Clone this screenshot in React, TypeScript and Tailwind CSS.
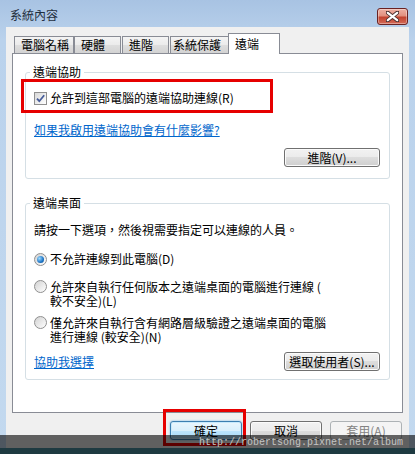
const font = "font-['Noto_Sans_CJK_TC','Liberation_Sans',sans-serif]";

const btn =
  "flex h-[19px] items-center justify-center rounded-[3px] border border-[#707070] bg-[linear-gradient(#f2f2f2_0%,#ebebeb_50%,#dddddd_50%,#cfcfcf_100%)] shadow-[inset_0_0_0_1px_#fbfbfb] text-[12px] leading-[16px] text-black";

function CheckBox() {
  return (
    <span className="flex h-[13px] w-[13px] shrink-0 items-center justify-center border border-[#8f8f8f] bg-[linear-gradient(135deg,#d8d8d8,#ffffff)]">
      <svg width="11" height="11" viewBox="0 0 11 11" aria-hidden="true">
        <path d="M2 5.6 L4.3 8.2 L9.2 2.2" fill="none" stroke="#465c99" strokeWidth="1.8" />
      </svg>
    </span>
  );
}

function Radio({ on }: { on?: boolean }) {
  return (
    <span className="flex h-[13px] w-[13px] shrink-0 items-center justify-center rounded-full border border-[#8f8f8f] bg-[linear-gradient(135deg,#d2d2d2,#ffffff)]">
      {on && (
        <span className="h-[7px] w-[7px] rounded-full bg-[radial-gradient(circle_at_35%_35%,#9fdcff,#1c74c6_60%,#0c4a86)]" />
      )}
    </span>
  );
}

function Tab({ label, w, pl, ml }: { label: string; w: string; pl: string; ml: string }) {
  return (
    <div
      className={`${w} ${pl} ${ml} flex h-[17px] items-center border border-b-0 border-[#898c95] bg-[linear-gradient(#f4f4f4_0%,#ebebeb_50%,#dedede_50%,#d3d3d3_100%)] text-[12px] leading-[16px]`}
    >
      {label}
    </div>
  );
}

export default function App() {
  return (
    <div
      className={`${font} relative flex h-[454px] w-[415px] flex-col overflow-hidden bg-[linear-gradient(#a8c3e3,#bad2ec_40px,#c3d9ef)] text-black`}
    >
      {/* title bar */}
      <div className="flex h-[27px] shrink-0 items-start justify-between pl-[10px] pr-[7px] pt-[8px]">
        <span className="mt-[-1px] text-[12px] leading-[16px] text-[#1f2f40]">系統內容</span>
        <div className="flex h-[17px] w-[31px] items-center justify-center rounded-[3px] border border-[#6a2222] bg-[linear-gradient(#edb0a3_0%,#e2907f_45%,#c2432f_55%,#d36a58_100%)] shadow-[inset_0_0_0_1px_rgba(255,255,255,0.35)]">
          <svg width="13" height="11" viewBox="0 0 13 11" aria-hidden="true">
            <path
              d="M1.5 1.5 L11.5 9.5 M11.5 1.5 L1.5 9.5"
              stroke="#4a3030"
              strokeWidth="4"
              strokeLinecap="round"
            />
            <path
              d="M1.8 1.8 L11.2 9.2 M11.2 1.8 L1.8 9.2"
              stroke="#ffffff"
              strokeWidth="2.2"
              strokeLinecap="round"
            />
          </svg>
        </div>
      </div>

      {/* client area */}
      <div className="mx-[6px] flex flex-1 flex-col bg-[#f0f0f0] px-[6px] pt-[6px]">
        <div className="flex h-[20px] items-end pl-[2px]">
          <Tab label="電腦名稱" w="w-[60px]" pl="pl-[6px]" ml="ml-0" />
          <Tab label="硬體" w="w-[47px]" pl="pl-[6px]" ml="ml-0" />
          <Tab label="進階" w="w-[47px]" pl="pl-[6px]" ml="ml-[1px]" />
          <Tab label="系統保護" w="w-[59px]" pl="pl-[2px]" ml="ml-[1px]" />
          <div className="relative z-10 mb-[-1px] ml-[-1px] flex h-[21px] w-[52px] items-center border border-b-0 border-[#898c95] bg-white pl-[6px] text-[12px] leading-[16px]">
            遠端
          </div>
        </div>

        <div className="flex h-[360px] flex-col border border-[#898c95] bg-white px-[12px]">
          <fieldset className="mt-[10px] rounded-[3px] border border-[#d5dfe5] pb-[11px] pl-[8px] pr-[9px] pt-[10px]">
            <legend className="ml-[-4px] px-[3px] text-[12px] leading-[16px]">遠端協助</legend>
            <div className="flex h-[16px] items-center gap-[3px] text-[12px] leading-[16px]">
              <CheckBox />
              <span>允許到這部電腦的遠端協助連線(R)</span>
            </div>
            <div className="mt-[16px] h-[16px] text-[12px] leading-[16px]">
              <span className="text-[#0066cc] underline">如果我啟用遠端協助會有什麼影響?</span>
            </div>
            <div className="mt-[10px] flex justify-end">
              <button className={`${btn} w-[96px]`}>進階(V)...</button>
            </div>
          </fieldset>

          <fieldset className="mt-[16px] rounded-[3px] border border-[#d5dfe5] pb-[8px] pl-[8px] pr-[9px] pt-[11px]">
            <legend className="ml-[-4px] px-[3px] text-[12px] leading-[16px]">遠端桌面</legend>
            <div className="h-[16px] text-[12px] leading-[16px]">
              請按一下選項，然後視需要指定可以連線的人員。
            </div>
            <div className="mt-[13px] flex h-[16px] items-center gap-[3px] text-[12px] leading-[16px]">
              <Radio on />
              <span>不允許連線到此電腦(D)</span>
            </div>
            <div className="mt-[13px] flex items-start gap-[3px] text-[12px] leading-[14px]">
              <Radio />
              <span>
                允許來自執行任何版本之遠端桌面的電腦進行連線 (
                <br />
                較不安全)(L)
              </span>
            </div>
            <div className="mt-[8px] flex items-start gap-[3px] text-[12px] leading-[14px]">
              <Radio />
              <span>
                僅允許來自執行含有網路層級驗證之遠端桌面的電腦
                <br />
                進行連線 (較安全)(N)
              </span>
            </div>
            <div className="mt-[8px] flex items-center justify-between">
              <span className="text-[12px] leading-[16px] text-[#0066cc] underline">協助我選擇</span>
              <button className={`${btn} w-[96px]`}>選取使用者(S)...</button>
            </div>
          </fieldset>
        </div>

        <div className="flex justify-end gap-[8px] pr-[1px] pt-[8px]">
          <button className="flex h-[19px] w-[72px] items-center justify-center rounded-[3px] border border-[#3c7fb1] bg-[linear-gradient(#eaf6fd_0%,#d9f0fc_50%,#bee6fd_50%,#a7d9f5_100%)] shadow-[inset_0_0_0_1px_#c8eafc,0_0_2px_#5fb4e8] text-[12px] leading-[16px]">
            確定
          </button>
          <button className={`${btn} w-[72px]`}>取消</button>
          <button className="flex h-[19px] w-[72px] items-center justify-center rounded-[3px] border border-[#adb2b5] bg-[#f4f4f4] text-[12px] leading-[16px] text-[#838383]">
            套用(A)
          </button>
        </div>
      </div>

      {/* red highlight boxes */}
      <div className="absolute left-[21px] top-[79px] h-[34px] w-[252px] border-[3px] border-[#e60000]" />
      <div className="absolute left-[163px] top-[409px] h-[37px] w-[83px] border-[3px] border-[#e60000]" />

      {/* watermark bar */}
      <div className="absolute left-0 top-[435px] w-full">
        <div className="relative h-[13px] bg-black/60">
          <span className="absolute right-[12px] top-[2px] font-['Liberation_Mono',monospace] text-[10px] leading-[12px] text-[#c4c4c4]">
            http://robertsong.pixnet.net/album
          </span>
        </div>
        <div className="h-[6px] bg-[#1e3a41]" />
      </div>
    </div>
  );
}
